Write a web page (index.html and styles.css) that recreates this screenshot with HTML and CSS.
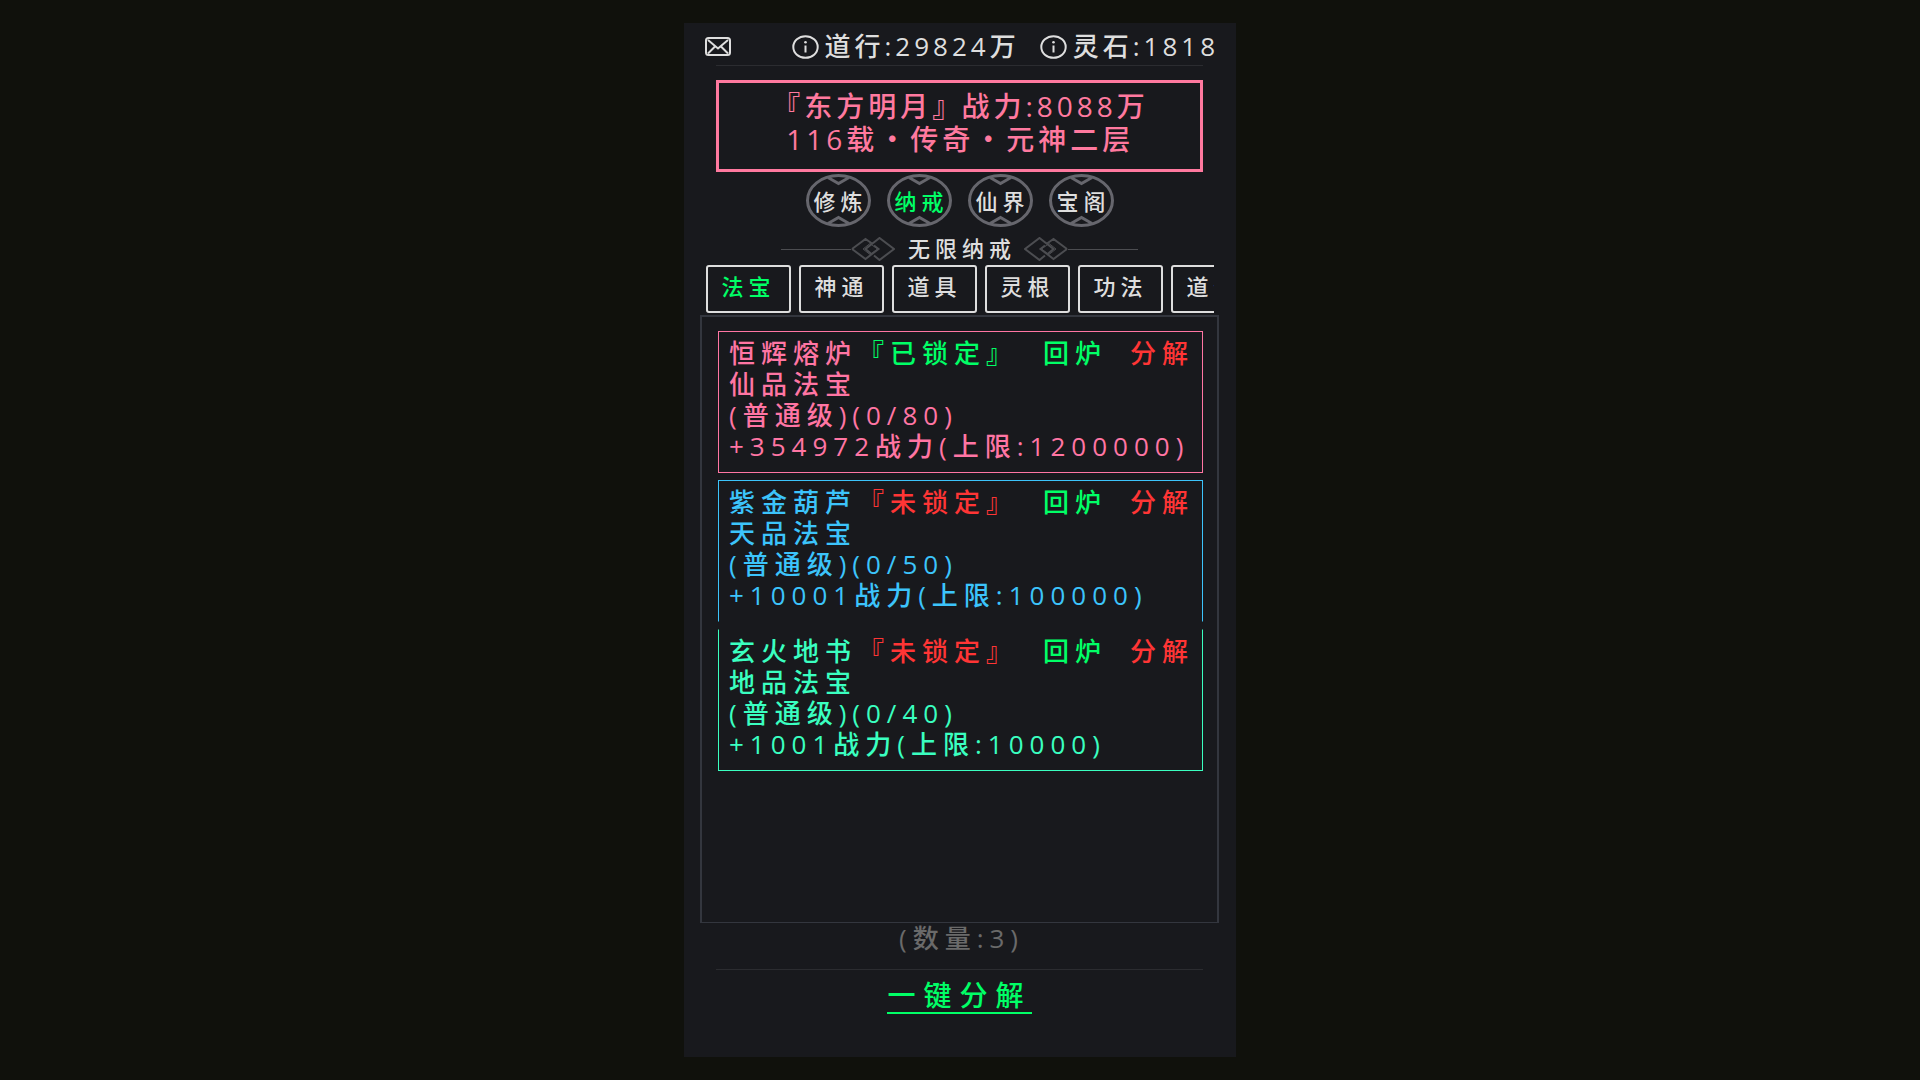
FILE: index.html
```html
<!DOCTYPE html>
<html lang="zh-CN">
<head>
<meta charset="utf-8">
<meta name="viewport" content="width=device-width, initial-scale=1">
<title>无限纳戒</title>
<link rel="stylesheet" href="styles.css">
</head>
<body>
<svg class="defs" aria-hidden="true">
  <symbol id="info" viewBox="0 0 27 24">
    <ellipse cx="13.5" cy="12" rx="12.2" ry="10.8" fill="none" stroke="currentColor" stroke-width="2"/>
    <circle cx="13.5" cy="7.3" r="1.3" fill="currentColor"/>
    <path d="M13.5 10.5v7" stroke="currentColor" stroke-width="2"/>
  </symbol>
  <symbol id="ring" viewBox="0 0 65 53">
    <ellipse cx="32.5" cy="26.5" rx="31" ry="25" fill="none" stroke="currentColor" stroke-width="3"/>
    <path d="M22 3.500L32.500 9.500 43 3.500M22 49.500L32.500 43.500 43 49.500" fill="none" stroke="currentColor" stroke-width="3"/>
  </symbol>
  <symbol id="knot" viewBox="0 0 44 24">
    <path d="M1 12L14.500 2 21 6.500M23 8.500L27.500 12 14.500 22 1 12M21 17.500L14.500 12 28.500 1 43 12 28.500 23 23 18.500" fill="none" stroke="currentColor" stroke-width="2"/>
    <path d="M12 12l7-5.500 7.500 5.500-7.500 5.500z" fill="none" stroke="currentColor" stroke-width="1"/>
  </symbol>
</svg>
<main class="game">
  <header class="status">
    <button class="mail" type="button" aria-label="邮件">
      <svg viewBox="0 0 26 19"><rect x="1" y="1" width="24" height="17" rx="2.500"/><path d="M3 3l10 8.500L23 3M3 16.500l7-7M23 16.500l-7-7"/></svg>
    </button>
    <div class="stats">
      <span class="stat"><svg class="info"><use href="#info"/></svg>道行:29824万</span>
      <span class="stat"><svg class="info"><use href="#info"/></svg>灵石:1818</span>
    </div>
  </header>
  <hr class="rule">
  <section class="hero">
    <div class="hero-text">
      <p>『东方明月』 战力:8088万</p>
      <p>116载<span class="dot">·</span>传奇<span class="dot">·</span>元神二层</p>
    </div>
  </section>
  <nav class="nav">
    <button class="nav-item" type="button"><svg class="ring"><use href="#ring"/></svg><span>修炼</span></button>
    <button class="nav-item active" type="button"><svg class="ring"><use href="#ring"/></svg><span>纳戒</span></button>
    <button class="nav-item" type="button"><svg class="ring"><use href="#ring"/></svg><span>仙界</span></button>
    <button class="nav-item" type="button"><svg class="ring"><use href="#ring"/></svg><span>宝阁</span></button>
  </nav>
  <div class="heading">
    <span class="line"></span>
    <svg class="knot"><use href="#knot"/></svg>
    <h1>无限纳戒</h1>
    <svg class="knot flip"><use href="#knot"/></svg>
    <span class="line"></span>
  </div>
  <div class="tabs">
    <button class="tab active" type="button">法宝</button>
    <button class="tab" type="button">神通</button>
    <button class="tab" type="button">道具</button>
    <button class="tab" type="button">灵根</button>
    <button class="tab" type="button">功法</button>
    <button class="tab" type="button">道侣</button>
  </div>
  <section class="panel">
    <article class="card pink">
      <div class="card-head">
        <h2>恒辉熔炉</h2>
        <button class="lock on" type="button">『已锁定』</button>
        <div class="actions"><button class="reforge" type="button">回炉</button><button class="split" type="button">分解</button></div>
      </div>
      <p>仙品法宝</p>
      <p>(普通级)(0/80)</p>
      <p>+354972战力(上限:1200000)</p>
    </article>
    <article class="card blue">
      <div class="card-head">
        <h2>紫金葫芦</h2>
        <button class="lock" type="button">『未锁定』</button>
        <div class="actions"><button class="reforge" type="button">回炉</button><button class="split" type="button">分解</button></div>
      </div>
      <p>天品法宝</p>
      <p>(普通级)(0/50)</p>
      <p>+10001战力(上限:100000)</p>
    </article>
    <article class="card teal">
      <div class="card-head">
        <h2>玄火地书</h2>
        <button class="lock" type="button">『未锁定』</button>
        <div class="actions"><button class="reforge" type="button">回炉</button><button class="split" type="button">分解</button></div>
      </div>
      <p>地品法宝</p>
      <p>(普通级)(0/40)</p>
      <p>+1001战力(上限:10000)</p>
    </article>
  </section>
  <p class="count">(数量:3)</p>
  <hr class="rule">
  <button class="split-all" type="button">一键分解</button>
</main>
</body>
</html>
```
FILE: styles.css
```css
* { box-sizing: border-box; }

body {
  margin: 0;
  min-height: 100vh;
  padding: 23px 0;
  background: #10110c;
  color: #dedede;
  font-family: "Open Sans", "Noto Sans CJK SC", sans-serif;
  font-size: 26px;
  font-weight: 500;
  line-height: 31px;
  font-feature-settings: "halt";
}

p, h1, h2 { margin: 0; font-size: inherit; font-weight: inherit; }

button {
  margin: 0;
  padding: 0;
  border: 0;
  background: none;
  color: inherit;
  font: inherit;
  font-feature-settings: inherit;
  letter-spacing: inherit;
  white-space: nowrap;
  cursor: pointer;
}

svg { display: block; flex: none; }
.defs { position: absolute; width: 0; height: 0; }

.game {
  display: flex;
  flex-direction: column;
  max-width: 552px;
  min-height: calc(100vh - 46px);
  margin: 0 auto;
  padding: 0 17px 43px 16px;
  background: #18191d;
}

.status {
  display: flex;
  align-items: center;
  justify-content: space-between;
  padding: 8px 0 3px 5px;
  letter-spacing: 4px;
}
.mail svg { width: 26px; height: 19px; fill: none; stroke: currentColor; stroke-width: 2; }
.stats { display: flex; gap: 20px; }
.stat { display: flex; align-items: center; gap: 6px; white-space: nowrap; }
.info { width: 27px; height: 24px; }

.rule {
  height: 1px;
  width: calc(100% - 32px);
  margin: 0 16px;
  border: 0;
  background: #2b2c30;
}

.hero {
  display: flex;
  justify-content: center;
  margin: 14px 16px 0;
  padding: 7px 0 14px 16px;
  border: 3px solid #ff799f;
  color: #ff799f;
  font-size: 28px;
  line-height: 32px;
  letter-spacing: 4px;
}
.dot { font-family: "Noto Sans CJK SC", sans-serif; font-feature-settings: normal; }

.nav {
  display: flex;
  justify-content: center;
  gap: 16px;
  margin-top: 2px;
}
.nav-item {
  display: grid;
  place-items: center;
  width: 65px;
  height: 53px;
  font-size: 22px;
  line-height: 28px;
  letter-spacing: 5px;
}
.nav-item > * { grid-area: 1 / 1; }
.nav-item span { padding-left: 5px; }
.ring { width: 65px; height: 53px; color: #66666d; }

.heading {
  display: flex;
  align-items: center;
  justify-content: center;
  height: 28px;
  margin-top: 8px;
}
.heading h1 {
  padding: 0 8px 3px 13px;
  font-size: 22px;
  line-height: 28px;
  letter-spacing: 5px;
}
.line { width: 70px; height: 1px; background: #4c4d51; }
.knot { width: 44px; height: 24px; color: #4c4d51; }
.flip { transform: scaleX(-1); }

.tabs {
  display: flex;
  gap: 8px;
  margin: 2px 5px 0 6px;
  overflow: hidden;
}
.tab {
  flex: none;
  width: 85px;
  height: 48px;
  padding-bottom: 6px;
  border: 2px solid #dedede;
  border-radius: 3px;
  font-size: 22px;
  line-height: 28px;
  letter-spacing: 5px;
}
.active { color: #00ff66; }

.panel {
  display: flex;
  flex: 1;
  flex-direction: column;
  gap: 7px;
  margin-top: 2px;
  padding: 14px 14px 12px 16px;
  border: 2px solid #33363e;
  border-bottom-width: 1px;
  letter-spacing: 6px;
}
.card {
  padding: 6px 8px 10px 10px;
  border: 1px solid;
}
.card-head { display: flex; }
.pink { color: #ff75a3; }
.blue { color: #3cc4fb; border-bottom-color: transparent; }
.teal { color: #3affc0; border-top-color: transparent; }
.lock { margin-left: 14px; color: #ff3535; }
.actions { display: flex; gap: 23px; margin-left: auto; }
.on, .reforge { color: #00ff66; }
.split { color: #ff3535; }

.count {
  margin-bottom: 15px;
  padding-left: 4px;
  color: #6a6a6a;
  letter-spacing: 6px;
  text-align: center;
}

.split-all {
  align-self: center;
  margin-top: 8px;
  border-bottom: 2px solid #00ff66;
  color: #00ff66;
  font-size: 28px;
  line-height: 34px;
  letter-spacing: 8px;
}
```
